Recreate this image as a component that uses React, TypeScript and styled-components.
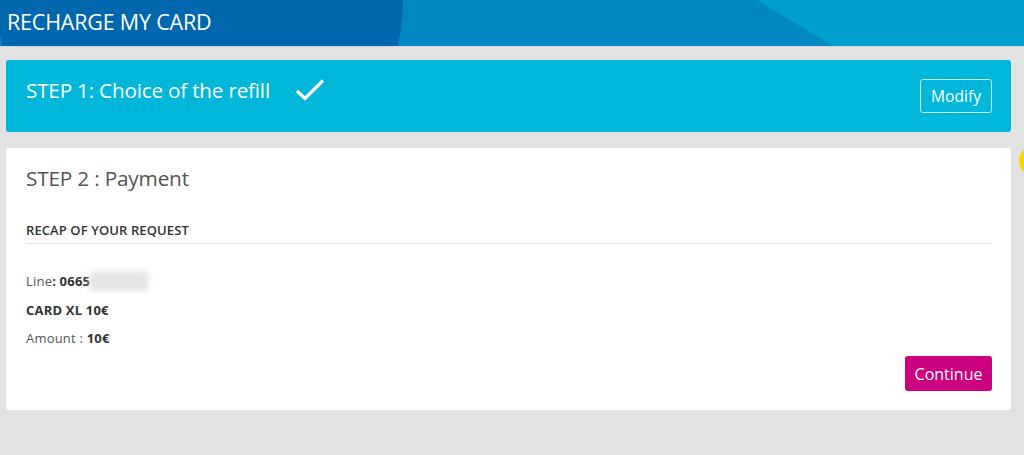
import styled, { createGlobalStyle } from 'styled-components'

const GlobalStyle = createGlobalStyle`
  html, body {
    margin: 0;
    padding: 0;
    background: #e2e2e2;
    font-family: 'Open Sans', 'Liberation Sans', sans-serif;
    overflow: hidden;
  }
`

const Page = styled.div`
  position: relative;
  width: 1024px;
  height: 455px;
  background: #e2e2e2;
`

const Header = styled.header`
  position: relative;
  height: 46px;
  border-bottom: 1px solid #cfd8dc;
  background: #0088c3;
  overflow: hidden;
`

const HeaderArt = styled.svg`
  position: absolute;
  inset: 0;
`

const HeaderTitle = styled.h1`
  position: relative;
  margin: 0;
  padding: 0 7px;
  font-size: 21.5px;
  font-weight: 400;
  line-height: 44px;
  color: #ffffff;
  letter-spacing: -0.2px;
`

const Content = styled.main`
  display: grid;
  gap: 16px;
  width: 1005px;
  padding: 13px 0 0 6px;
`

const StepDone = styled.section`
  display: flex;
  justify-content: space-between;
  align-items: flex-start;
  height: 72px;
  box-sizing: border-box;
  padding: 16px 19px 0 20px;
  border-radius: 3px;
  background: #00b6d9;
  color: #ffffff;
`

const StepTitle = styled.div`
  display: flex;
  align-items: center;
  gap: 24px;
  font-size: 20.7px;
  line-height: 28px;
  letter-spacing: -0.2px;
`

const GhostButton = styled.button`
  margin-top: 3px;
  width: 72px;
  height: 34px;
  border: 1px solid rgba(255, 255, 255, 0.75);
  border-radius: 3px;
  background: transparent;
  color: #ffffff;
  font-family: inherit;
  font-size: 15.6px;
  padding: 0;
`

const Card = styled.section`
  display: flex;
  flex-direction: column;
  height: 262px;
  box-sizing: border-box;
  padding: 16px 19px 19px 20px;
  border-radius: 3px;
  background: #ffffff;
`

const CardTitle = styled.h2`
  margin: 0;
  font-size: 20.8px;
  font-weight: 400;
  line-height: 28px;
  color: #555555;
  letter-spacing: -0.2px;
`

const SectionTitle = styled.h3`
  margin: 29px 0 0;
  padding-bottom: 4px;
  border-bottom: 1px solid #e8e8e8;
  font-size: 13px;
  font-weight: 600;
  line-height: 18px;
  letter-spacing: 0.1px;
  color: #333333;
`

const Recap = styled.div`
  display: grid;
  gap: 10px;
  margin-top: 28px;
`

const Row = styled.div`
  font-size: 13px;
  line-height: 18px;
  letter-spacing: 0.2px;
  color: #555555;

  b {
    font-weight: 700;
    color: #333333;
  }
`

const Hidden = styled.span`
  display: inline-block;
  width: 58px;
  height: 20px;
  margin-top: -1px;
  vertical-align: top;
  background: #e4e4e4;
  filter: blur(3px);
`

const Actions = styled.div`
  display: flex;
  justify-content: flex-end;
  margin-top: 9px;
`

const PrimaryButton = styled.button`
  width: 87px;
  height: 35px;
  border: 0;
  border-radius: 3px;
  background: #cc007e;
  color: #ffffff;
  font-family: inherit;
  font-size: 16px;
  padding: 0;
`

const Bubble = styled.div`
  position: absolute;
  left: 1019px;
  top: 146px;
  width: 30px;
  height: 30px;
  border-radius: 50%;
  background: #f3d800;
`

export default function App() {
  return (
    <Page>
      <GlobalStyle />
      <Header>
        <HeaderArt width="1024" height="46" viewBox="0 0 1024 46">
          <polygon points="757,0 1024,0 1024,46 833,46" fill="#009fcf" />
          <circle cx="200" cy="0" r="203" fill="#0067ae" />
        </HeaderArt>
        <HeaderTitle>RECHARGE MY CARD</HeaderTitle>
      </Header>

      <Content>
        <StepDone>
          <StepTitle>
            <span>STEP 1: Choice of the refill</span>
            <svg width="32" height="26" viewBox="0 0 32 26">
              <path d="M3 14 L11 21.5 L29 3.5" fill="none" stroke="#ffffff" strokeWidth="3.2" />
            </svg>
          </StepTitle>
          <GhostButton type="button">Modify</GhostButton>
        </StepDone>

        <Card>
          <CardTitle>STEP 2 : Payment</CardTitle>
          <SectionTitle>RECAP OF YOUR REQUEST</SectionTitle>
          <Recap>
            <Row>
              Line<b>: 0665</b>
              <Hidden />
            </Row>
            <Row>
              <b>CARD XL 10€</b>
            </Row>
            <Row>
              Amount : <b>10€</b>
            </Row>
          </Recap>
          <Actions>
            <PrimaryButton type="button">Continue</PrimaryButton>
          </Actions>
        </Card>
      </Content>

      <Bubble />
    </Page>
  )
}
